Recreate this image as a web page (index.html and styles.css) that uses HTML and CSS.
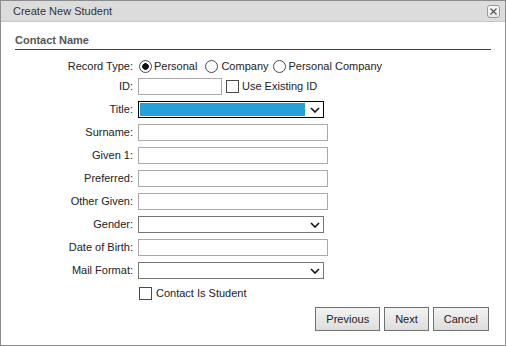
FILE: index.html
```html
<!DOCTYPE html>
<html>
<head>
<meta charset="utf-8">
<title>Create New Student</title>
<link rel="stylesheet" href="styles.css">
</head>
<body>
<div class="dialog">
  <div class="titlebar">
    <span class="title">Create New Student</span>
    <span class="close">
      <svg width="11" height="11" viewBox="0 0 11 11"><path d="M2.5 2.5 L8.5 8.5 M8.5 2.5 L2.5 8.5" stroke="#555" stroke-width="1.3" fill="none"/></svg>
    </span>
  </div>
  <div class="section">Contact Name</div>
  <div class="form">
    <label class="lbl row1">Record Type:</label>
    <div class="ctl row1">
      <input type="radio" name="rt" class="radio r1" checked><span>Personal</span>
      <input type="radio" name="rt" class="radio r2"><span>Company</span>
      <input type="radio" name="rt" class="radio r3"><span>Personal Company</span>
    </div>

    <label class="lbl">ID:</label>
    <div class="ctl">
      <input type="text" class="text short">
      <input type="checkbox" class="check after-id"><span>Use Existing ID</span>
    </div>

    <label class="lbl">Title:</label>
    <div class="ctl">
      <div class="select focused"><span class="fill"></span><svg class="chev" width="10" height="6" viewBox="0 0 10 6"><path d="M1 1 L5 5 L9 1" stroke="#111" stroke-width="1.6" fill="none"/></svg></div>
    </div>

    <label class="lbl">Surname:</label>
    <div class="ctl"><input type="text" class="text"></div>

    <label class="lbl">Given 1:</label>
    <div class="ctl"><input type="text" class="text"></div>

    <label class="lbl">Preferred:</label>
    <div class="ctl"><input type="text" class="text"></div>

    <label class="lbl">Other Given:</label>
    <div class="ctl"><input type="text" class="text"></div>

    <label class="lbl">Gender:</label>
    <div class="ctl">
      <div class="select"><svg class="chev" width="10" height="6" viewBox="0 0 10 6"><path d="M1 1 L5 5 L9 1" stroke="#111" stroke-width="1.6" fill="none"/></svg></div>
    </div>

    <label class="lbl">Date of Birth:</label>
    <div class="ctl"><input type="text" class="text"></div>

    <label class="lbl">Mail Format:</label>
    <div class="ctl">
      <div class="select"><svg class="chev" width="10" height="6" viewBox="0 0 10 6"><path d="M1 1 L5 5 L9 1" stroke="#111" stroke-width="1.6" fill="none"/></svg></div>
    </div>

    <div class="ctl span2">
      <input type="checkbox" class="check student"><span>Contact Is Student</span>
    </div>
  </div>
  <div class="buttons">
    <button class="btn">Previous</button>
    <button class="btn">Next</button>
    <button class="btn">Cancel</button>
  </div>
</div>
</body>
</html>
```
FILE: styles.css
```css
html, body {
  margin: 0;
  padding: 0;
  background: #fff;
}
body {
  font-family: "Liberation Sans", Arial, sans-serif;
  font-size: 11px;
  color: #222;
}
.dialog {
  width: 506px;
  height: 346px;
  box-sizing: border-box;
  border: 1px solid #8c8c8c;
  background: #fff;
}
.titlebar {
  height: 20px;
  background: #dcdcdc;
  border-bottom: 1px solid #c6c6c6;
  display: flex;
  align-items: center;
  justify-content: space-between;
  padding: 0 5px 0 12px;
}
.title {
  color: #333;
  font-size: 11px;
}
.close {
  width: 11px;
  height: 11px;
  border: 1px solid #9a9a9a;
  border-radius: 3px;
  background: linear-gradient(#fbfbfb, #e8e8e8);
  display: flex;
}
.section {
  margin: 0 14px;
  padding: 11px 0 2px 0;
  line-height: 14px;
  font-weight: bold;
  color: #555;
  border-bottom: 1px solid #444;
}
.form {
  margin-top: 5px;
  display: grid;
  grid-template-columns: 132px 1fr;
  column-gap: 5px;
  row-gap: 6px;
  grid-auto-rows: 17px;
  align-items: center;
}
.lbl {
  text-align: right;
  color: #222;
  line-height: 17px;
}
.row1 {
  align-self: start;
  margin-top: 3px;
}
.ctl {
  display: flex;
  align-items: center;
  height: 17px;
  line-height: 17px;
}
.span2 {
  grid-column: 2;
}
.text {
  width: 190px;
  height: 17px;
  box-sizing: border-box;
  border: 1px solid #a9a9a9;
  margin: 0;
  padding: 0 2px;
  font: inherit;
  background: #fff;
}
.text.short {
  width: 84px;
}
.radio {
  appearance: none;
  -webkit-appearance: none;
  width: 13px;
  height: 13px;
  box-sizing: border-box;
  border: 1px solid #4a4a4a;
  border-radius: 50%;
  margin: 0 3px 0 4px;
  background: #fff;
}
.radio.r1 {
  margin: 0 2px 0 1px;
}
.radio.r2 {
  margin-left: 8px;
}
.radio:checked {
  background: radial-gradient(circle, #111 0 3px, #fff 3.6px);
}
.check {
  appearance: none;
  -webkit-appearance: none;
  width: 13px;
  height: 13px;
  box-sizing: border-box;
  border: 1px solid #4a4a4a;
  margin: 0 3px 0 4px;
  background: #fff;
}
.check.student {
  margin: 0 4px 0 1px;
}
.select {
  width: 186px;
  height: 17px;
  box-sizing: border-box;
  border: 1px solid #767676;
  padding: 1px;
  display: flex;
  align-items: center;
  background: #fff;
}
.select.focused {
  border-color: #000;
}
.fill {
  width: 165px;
  height: 100%;
  background: #25a0da;
}
.chev {
  margin-left: auto;
  margin-right: 2px;
}
.buttons {
  display: flex;
  justify-content: flex-end;
  gap: 4px;
  margin-top: 5px;
  padding-right: 16px;
}
.btn {
  height: 24px;
  padding: 0 10px;
  margin: 0;
  border: 1px solid #707070;
  border-radius: 0;
  background: linear-gradient(#f3f3f3, #dddddd);
  font: inherit;
  color: #222;
}
```
